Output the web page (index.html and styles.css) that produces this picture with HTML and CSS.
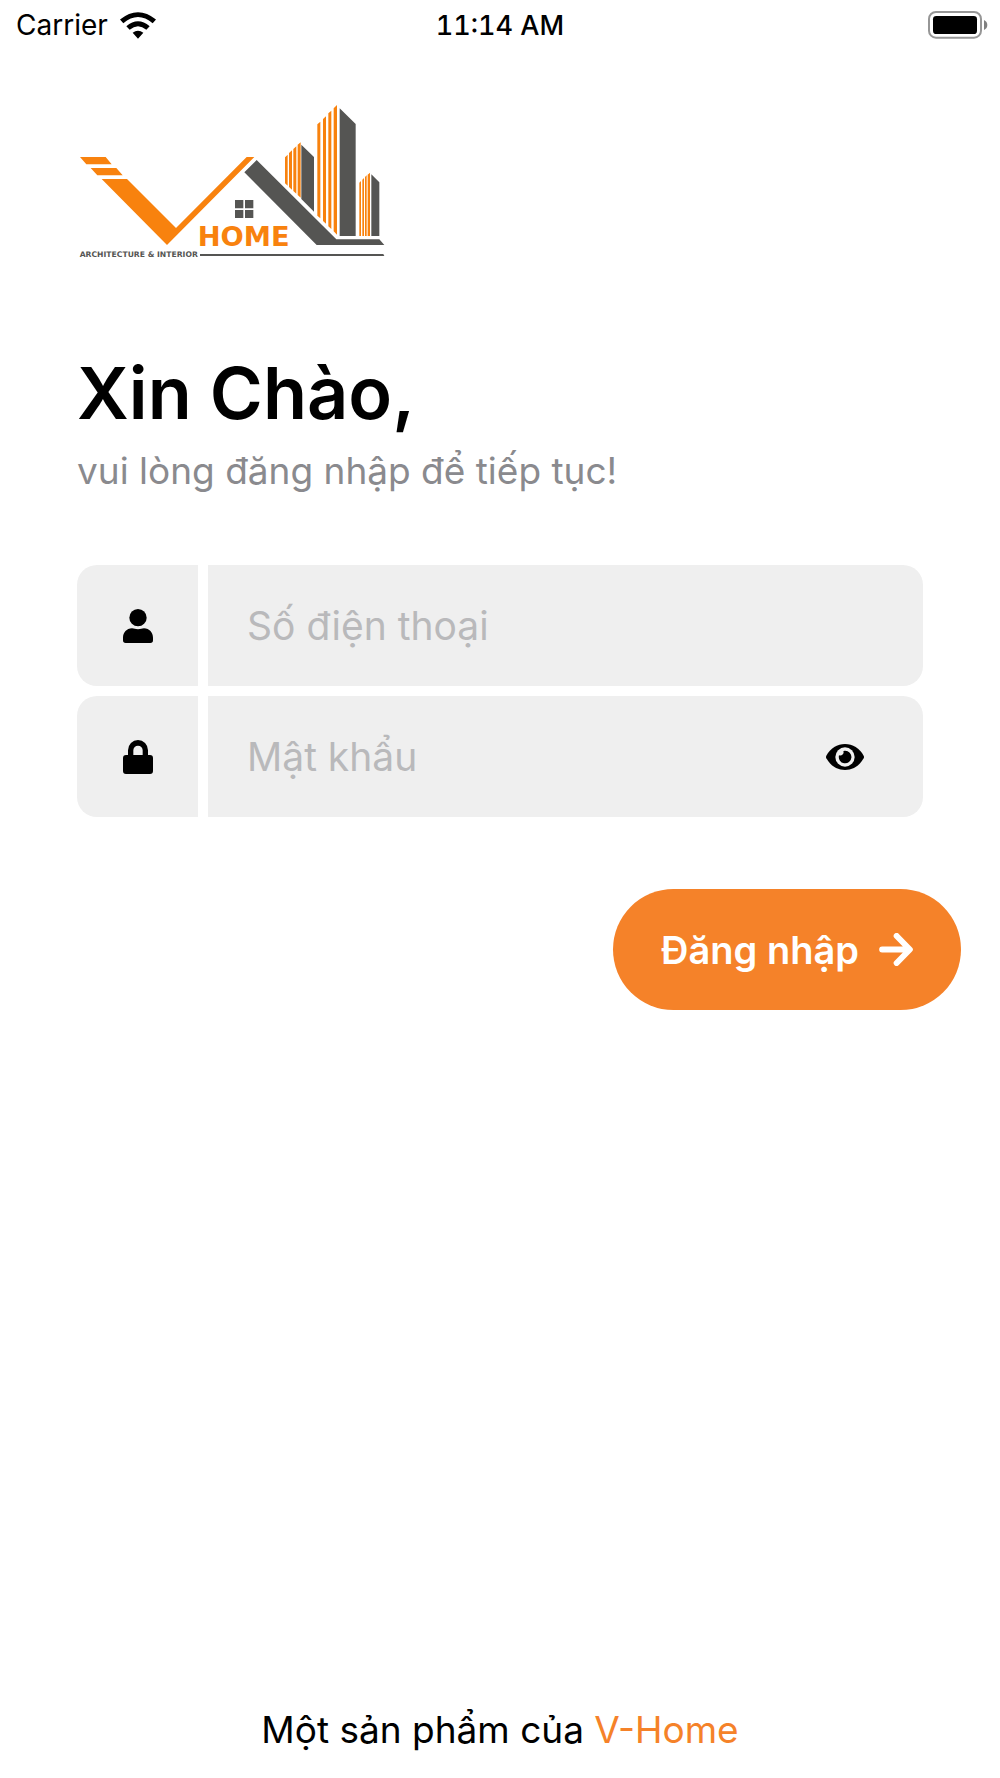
FILE: index.html
```html
<!DOCTYPE html>
<html lang="vi">
<head>
<meta charset="utf-8">
<meta name="viewport" content="width=device-width, initial-scale=1">
<title>V-Home - Đăng nhập</title>
<link rel="stylesheet" href="styles.css">
</head>
<body>
<div class="screen">
  <header class="status">
    <div class="status-left">
      <span>Carrier</span>
      <svg class="wifi" viewBox="0 0 108 80" aria-hidden="true">
        <path d="M0 22Q54-22 108 22L98 33Q54-4 10 33ZM19 42Q54 12 89 42L79 53Q54 32 29 53ZM38 62Q54 50 70 62L54 80Z"/>
      </svg>
    </div>
    <span class="status-time">11:14 AM</span>
    <div class="status-right">
      <svg class="battery" viewBox="0 0 180 84" aria-hidden="true">
        <rect x="3" y="3" width="156" height="77" rx="21" fill="#fff" stroke="#969696" stroke-width="6"/>
        <rect x="15" y="15" width="132" height="54" rx="10"/>
        <path d="M168 27Q178 32 178 42T168 57Z" fill="#808080"/>
      </svg>
    </div>
  </header>

  <main class="content">
    <svg class="logo" viewBox="21 24 924 468" role="img" aria-label="V-Home Architecture &amp; Interior">
      <g fill="#f8820e">
        <path d="M30 186H107L125 208H49ZM62 219H139L158 241H82ZM95 252H171L318 399L530 186H553L291 450Z"/>
        <path d="M645 187L653 179V272L645 265ZM657 174L666 166V284L657 276ZM670 162L679 154V296L670 288ZM683 149L692 142V308L683 300Z"/>
        <path d="M742 88L751 80V370L742 362ZM759 72L768 64V386L759 378ZM775 55L784 47V402L775 394ZM791 40L801 30V419L791 409Z"/>
        <path d="M868 263L873 258V423H868ZM877 254L882 249V423H877ZM885 246L890 241V423H885ZM893 239L900 233V423H893Z"/>
        <text class="logo-name" x="383" y="452">HOME</text>
      </g>
      <g fill="#555553">
        <path d="M523 232L560 195L799 433H928L943 450H740Z"/>
        <path d="M694 149L732 186V350L694 312ZM809 40L857 87V423H809ZM904 238L928 262V423H904Z"/>
        <path d="M495 315H520V340H495ZM525 315H550V340H525ZM495 345H520V369H495ZM525 345H550V369H525Z"/>
        <path d="M390 477H940L943 483H390Z"/>
        <text class="logo-tagline" x="29" y="485">ARCHITECTURE &amp; INTERIOR</text>
      </g>
    </svg>

    <h1 class="title">Xin Chào,</h1>
    <p class="subtitle">vui lòng đăng nhập để tiếp tục!</p>

    <form class="form">
      <div class="field">
        <label class="field-icon" for="phone" aria-label="Số điện thoại">
          <svg class="icon" viewBox="0 0 90 102" aria-hidden="true">
            <circle cx="45" cy="26" r="26"/>
            <path d="M27 58C34 58 36 61 45 61S56 58 63 58C79 58 90 71 90 86V94Q90 102 82 102H8Q0 102 0 94V86C0 71 11 58 27 58Z"/>
          </svg>
        </label>
        <div class="field-box">
          <input class="input" id="phone" type="tel" placeholder="Số điện thoại">
        </div>
      </div>
      <div class="field">
        <label class="field-icon" for="password" aria-label="Mật khẩu">
          <svg class="icon" viewBox="0 0 90 102" aria-hidden="true">
            <path fill-rule="evenodd" d="M15 45V31A30 31 0 0 1 75 31V45H81Q90 45 90 54V93Q90 102 81 102H9Q0 102 0 93V54Q0 45 9 45ZM31 45H59V31A14 14 0 0 0 31 31Z"/>
          </svg>
        </label>
        <div class="field-box">
          <input class="input" id="password" type="password" placeholder="Mật khẩu">
          <button class="reveal" type="button" aria-label="Hiện mật khẩu">
            <svg class="eye" viewBox="0 0 114 78" aria-hidden="true">
              <path d="M1 35C13 13 34 0 57 0S101 13 113 35Q115 39 113 43C101 65 80 78 57 78S13 65 1 43Q-1 39 1 35Z"/>
              <circle cx="57" cy="39" r="29" fill="#efefef"/>
              <path d="M57 20A19 19 0 1 1 39 34A10 10 0 0 0 52 21Q54 20 57 20Z"/>
            </svg>
          </button>
        </div>
      </div>
      <button class="submit" type="submit">
        <span>Đăng nhập</span>
        <svg class="arrow" viewBox="0 0 102 100" aria-hidden="true">
          <path d="M9 50H91M53 9L93 50L53 91" fill="none" stroke="#fff" stroke-width="18" stroke-linecap="round" stroke-linejoin="round"/>
        </svg>
      </button>
    </form>
  </main>

  <footer class="footer">Một sản phẩm của <a class="brand" href="#">V-Home</a></footer>
</div>
</body>
</html>
```
FILE: styles.css
```css
* {
  box-sizing: border-box;
}

body {
  margin: 0;
  background: #fff;
  color: #000;
  font-family: Inter, "Liberation Sans", sans-serif;
}

.screen {
  display: flex;
  flex-direction: column;
  min-height: 100vh;
}

.status {
  display: grid;
  grid-template-columns: 1fr auto 1fr;
  align-items: center;
  height: 50px;
  padding: 0 12px;
  font-size: 28px;
}

.status-left {
  display: flex;
  align-items: center;
  gap: 12px;
  padding-left: 4px;
}

.status-time {
  font-size: 27px;
  font-weight: 500;
  font-variant-numeric: tabular-nums;
}

.status-right {
  display: flex;
  justify-content: flex-end;
}

.wifi {
  width: 36px;
  height: 27px;
}

.battery {
  width: 60px;
  height: 28px;
}

.content {
  flex: 1;
  padding: 53px 77px 0;
}

.logo {
  display: block;
  width: 308px;
  height: 156px;
}

.logo-name {
  font: bold 82px "DejaVu Sans", sans-serif;
}

.logo-tagline {
  font: bold 23px "DejaVu Sans", sans-serif;
}

.title {
  margin: 88px 0 0;
  font-size: 72px;
  font-weight: 600;
  line-height: 92px;
}

.subtitle {
  margin: 8px 0 0;
  color: #8a8a8e;
  font-size: 37px;
  line-height: 48px;
}

.form {
  display: flex;
  flex-direction: column;
  gap: 10px;
  margin-top: 70px;
}

.field {
  display: flex;
  gap: 10px;
  height: 121px;
  border-radius: 20px;
  overflow: hidden;
}

.field-icon {
  display: flex;
  flex: none;
  align-items: center;
  justify-content: center;
  width: 121px;
  background: #efefef;
}

.icon {
  width: 30px;
  height: 34px;
}

.field-box {
  display: flex;
  flex: 1;
  align-items: center;
  min-width: 0;
  padding: 0 59px 0 39px;
  background: #efefef;
}

.input {
  flex: 1;
  min-width: 0;
  height: 100%;
  padding: 0;
  border: 0;
  outline: 0;
  background: transparent;
  color: #000;
  font: 39px Inter, "Liberation Sans", sans-serif;
}

.input::placeholder {
  color: #b9b9bb;
}

.reveal {
  display: flex;
  padding: 0;
  border: 0;
  background: none;
}

.eye {
  width: 38px;
  height: 26px;
}

.submit {
  display: flex;
  align-items: center;
  justify-content: center;
  align-self: flex-end;
  gap: 20px;
  height: 121px;
  margin: 62px -38px 0 0;
  padding: 0 48px;
  border: 0;
  border-radius: 61px;
  background: #f58229;
  color: #fff;
  font: 600 38px Inter, "Liberation Sans", sans-serif;
}

.arrow {
  width: 34px;
  height: 33px;
}

.footer {
  padding: 0 20px 24px;
  font-size: 37px;
  line-height: 48px;
  text-align: center;
}

.brand {
  color: #f58229;
  text-decoration: none;
}
```
